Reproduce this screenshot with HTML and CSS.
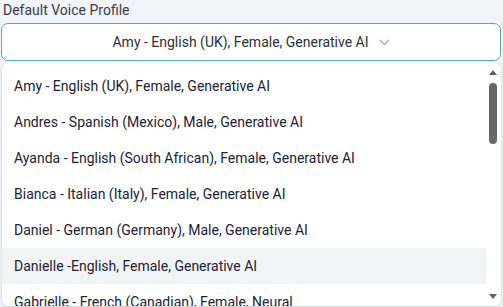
FILE: index.html
```html
<!DOCTYPE html>
<html lang="en">
<head>
  <meta charset="UTF-8" />
  <title>Default Voice Profile</title>
  <link rel="stylesheet" href="styles.css">
</head>
<body>
  <div class="field">
    <label class="field-label">Default Voice Profile</label>
    <div class="select">
      <span>Amy - English (UK), Female, Generative AI</span>
      <svg class="chevron" width="11" height="7" viewBox="0 0 11 7">
        <path d="M1 1l4.5 4.5L10 1" fill="none" stroke="#a3a8b3" stroke-width="1.3"/>
      </svg>
    </div>
    <div class="menu">
      <ul class="options">
        <li>Amy - English (UK), Female, Generative AI</li>
        <li>Andres - Spanish (Mexico), Male, Generative AI</li>
        <li>Ayanda - English (South African), Female, Generative AI</li>
        <li>Bianca - Italian (Italy), Female, Generative AI</li>
        <li>Daniel - German (Germany), Male, Generative AI</li>
        <li class="hover">Danielle -English, Female, Generative AI</li>
        <li>Gabrielle - French (Canadian), Female, Neural</li>
      </ul>
      <div class="scrollbar">
        <span class="arrow up"></span>
        <span class="thumb"></span>
        <span class="arrow down"></span>
      </div>
    </div>
  </div>
</body>
</html>
```
FILE: styles.css
```css
body {
  margin: 0;
  padding: 0 2px 0 1px;
  background-color: #f1f4f9;
  font-family: Roboto, "Liberation Sans", sans-serif;
  font-size: 14px;
  height: 307px;
  overflow: hidden;
}

.field-label {
  display: block;
  color: #3a3d42;
  line-height: 20px;
  padding: 0 0 3px 2px;
}

.select {
  height: 38px;
  box-sizing: border-box;
  background: white;
  border: 1.5px solid #5aaea4;
  border-radius: 7px;
  display: flex;
  align-items: center;
  justify-content: center;
  gap: 10px;
  color: #2e3138;
}

.chevron {
  margin-top: 1px;
}

.menu {
  position: relative;
  margin: 2px 0 0 1px;
  height: 243px;
  background: white;
  border-radius: 6px;
  box-shadow: 0 1px 3px rgba(0,0,0,0.18);
  overflow: hidden;
}

.options {
  list-style: none;
  margin: 0;
  padding: 5px 15px 0 0;
}

.options li {
  height: 36px;
  line-height: 36px;
  padding-left: 12px;
  color: #1c2333;
  white-space: nowrap;
}

.options li.hover {
  background: #f2f3f5;
}

.scrollbar {
  position: absolute;
  top: 6px;
  right: 3px;
  bottom: 6px;
  width: 10px;
}

.arrow {
  position: absolute;
  left: 1px;
  width: 0;
  height: 0;
  border-left: 4px solid transparent;
  border-right: 4px solid transparent;
}

.arrow.up {
  top: 1px;
  border-bottom: 5px solid #5f6063;
}

.arrow.down {
  bottom: 1px;
  border-top: 5px solid #5f6063;
}

.thumb {
  position: absolute;
  top: 14px;
  left: 1px;
  width: 8px;
  height: 61px;
  border-radius: 4px;
  background: #686868;
}
```
